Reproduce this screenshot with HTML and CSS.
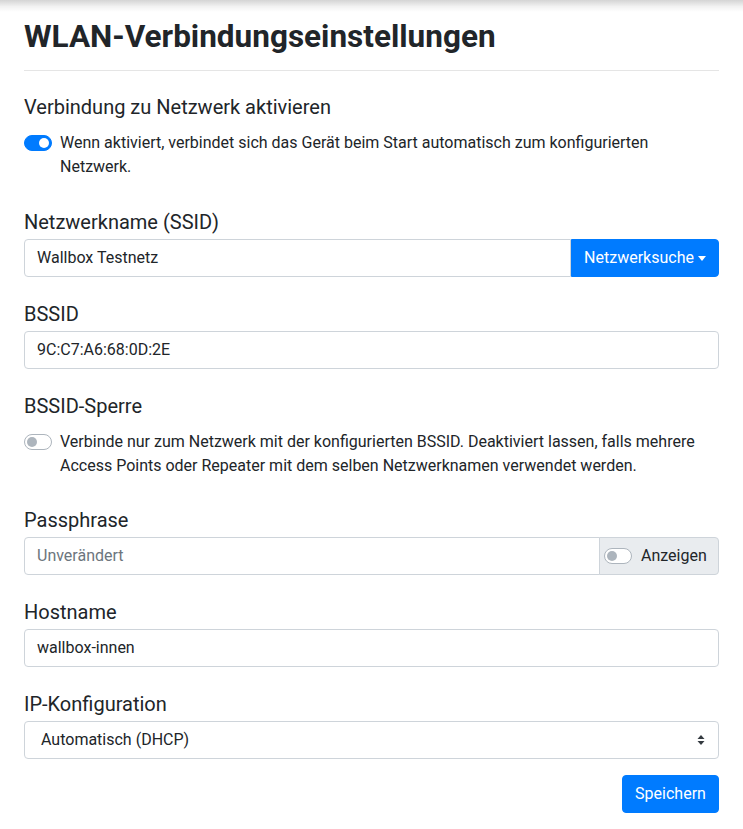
FILE: index.html
```html
<!DOCTYPE html>
<html lang="de">
<head>
<meta charset="utf-8">
<title>WLAN-Verbindungseinstellungen</title>
<link rel="stylesheet" href="styles.css">
</head>
<body>
<div class="top-shadow"></div>
<main class="page">
  <h2 class="page-title">WLAN-Verbindungseinstellungen</h2>
  <hr class="divider">

  <div class="group group-switch">
    <div class="group-label">Verbindung zu Netzwerk aktivieren</div>
    <div class="switch-row">
      <span class="switch switch-on"><span class="knob"></span></span>
      <span class="switch-text">Wenn aktiviert, verbindet sich das Gerät beim Start automatisch zum konfigurierten Netzwerk.</span>
    </div>
  </div>

  <div class="group">
    <label class="group-label">Netzwerkname (SSID)</label>
    <div class="input-group">
      <div class="input input-left">Wallbox Testnetz</div>
      <button class="btn btn-primary btn-append">Netzwerksuche<span class="caret"></span></button>
    </div>
  </div>

  <div class="group">
    <label class="group-label">BSSID</label>
    <div class="input">9C:C7:A6:68:0D:2E</div>
  </div>

  <div class="group group-switch group-switch-compact">
    <div class="group-label">BSSID-Sperre</div>
    <div class="switch-row">
      <span class="switch"><span class="knob"></span></span>
      <span class="switch-text">Verbinde nur zum Netzwerk mit der konfigurierten BSSID. Deaktiviert lassen, falls mehrere Access Points oder Repeater mit dem selben Netzwerknamen verwendet werden.</span>
    </div>
  </div>

  <div class="group">
    <label class="group-label">Passphrase</label>
    <div class="input-group">
      <div class="input input-left placeholder">Unverändert</div>
      <div class="append-text">
        <span class="switch"><span class="knob"></span></span>
        <span>Anzeigen</span>
      </div>
    </div>
  </div>

  <div class="group">
    <label class="group-label">Hostname</label>
    <div class="input">wallbox-innen</div>
  </div>

  <div class="group group-last">
    <label class="group-label">IP-Konfiguration</label>
    <div class="input select">
      <span class="select-value">Automatisch (DHCP)</span>
      <svg class="select-arrows" width="8" height="10" viewBox="0 0 8 10"><path d="M4 0 L7.5 4 H0.5 Z M4 10 L0.5 6 H7.5 Z" fill="#343a40"/></svg>
    </div>
  </div>

  <div class="actions">
    <button class="btn btn-primary btn-save">Speichern</button>
  </div>
</main>
</body>
</html>
```

FILE: styles.css
```css
* { box-sizing: border-box; }
html, body {
  margin: 0;
  padding: 0;
  background: #fff;
}
body {
  font-family: Roboto, "Liberation Sans", Arial, sans-serif;
  font-size: 16px;
  line-height: 1.5;
  color: #212529;
}
.top-shadow {
  height: 12px;
  background: linear-gradient(to bottom, rgba(0,0,0,0.17), rgba(0,0,0,0.05) 55%, rgba(0,0,0,0));
}
.page {
  padding: 6px 24px 0 24px;
}
.page-title {
  margin: 0;
  font-size: 31.5px;
  font-weight: 700;
  line-height: 38px;
}
.divider {
  margin: 14px 0 21px 0;
  border: 0;
  border-top: 1px solid rgba(0,0,0,0.1);
}
.group {
  margin-bottom: 22px;
}
.group-last {
  margin-bottom: 16px;
}
.group-label {
  display: block;
  font-size: 20px;
  line-height: 30px;
  margin-bottom: 2px;
}
.group-switch {
  margin-bottom: 28px;
}
.group-switch-compact {
  margin-bottom: 27px;
}
.group-switch .group-label {
  margin-bottom: 9px;
}
.switch-row {
  display: flex;
  align-items: flex-start;
  gap: 8px;
}
.switch {
  position: relative;
  flex: none;
  width: 28px;
  height: 16px;
  margin-top: 4px;
  border: 1px solid #adb5bd;
  border-radius: 8px;
  background: #fff;
}
.switch .knob {
  position: absolute;
  top: 2px;
  left: 2px;
  width: 10px;
  height: 10px;
  border-radius: 50%;
  background: #adb5bd;
}
.switch-on {
  background: #007bff;
  border-color: #007bff;
}
.switch-on .knob {
  left: 14px;
  background: #fff;
}
.switch-text {
  flex: 1;
}
.input {
  height: 38px;
  padding: 6px 12px;
  border: 1px solid #ced4da;
  border-radius: 4px;
  background: #fff;
  font-size: 16px;
  line-height: 24px;
  color: #212529;
}
.placeholder {
  color: #6c757d;
}
.input-group {
  display: flex;
}
.input-left {
  flex: 1;
  border-top-right-radius: 0;
  border-bottom-right-radius: 0;
}
.btn {
  font-family: inherit;
  font-size: 16px;
  line-height: 24px;
  padding: 6px 12px;
  border: 1px solid transparent;
  border-radius: 4px;
  cursor: pointer;
}
.btn-primary {
  background: #007bff;
  border-color: #007bff;
  color: #fff;
}
.btn-append {
  width: 148px;
  height: 38px;
  border-top-left-radius: 0;
  border-bottom-left-radius: 0;
  display: flex;
  align-items: center;
  justify-content: center;
}
.caret {
  display: inline-block;
  margin-left: 4px;
  border-top: 5px solid #fff;
  border-left: 4px solid transparent;
  border-right: 4px solid transparent;
}
.append-text {
  display: flex;
  align-items: center;
  gap: 9px;
  width: 120px;
  height: 38px;
  padding: 0 12px 0 4px;
  margin-left: -1px;
  background: #e9ecef;
  border: 1px solid #ced4da;
  border-radius: 0 4px 4px 0;
  color: #212529;
}
.append-text .switch {
  margin-top: 0;
}
.select {
  display: flex;
  align-items: center;
  justify-content: space-between;
  padding-left: 16px;
  padding-right: 13px;
}
.select-arrows {
  display: block;
}
.actions {
  display: flex;
  justify-content: flex-end;
}
.btn-save {
  height: 38px;
  width: 97px;
}
```
